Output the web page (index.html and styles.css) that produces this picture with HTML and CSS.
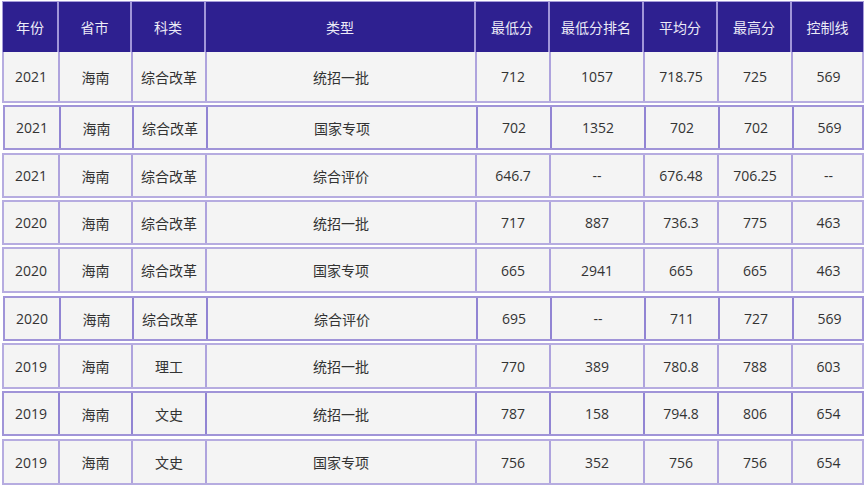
FILE: index.html
```html
<!DOCTYPE html>
<html lang="zh">
<head>
<meta charset="utf-8">
<link rel="stylesheet" href="styles.css">
</head>
<body>
<div class="table">
  <div class="row head">
    <div class="c">年份</div><div class="c">省市</div><div class="c">科类</div><div class="c">类型</div><div class="c">最低分</div><div class="c">最低分排名</div><div class="c">平均分</div><div class="c">最高分</div><div class="c">控制线</div>
  </div>
  <div class="row first">
    <div class="c">2021</div><div class="c">海南</div><div class="c">综合改革</div><div class="c">统招一批</div><div class="c">712</div><div class="c">1057</div><div class="c">718.75</div><div class="c">725</div><div class="c">569</div>
  </div>
  <div class="row dark shift">
    <div class="c">2021</div><div class="c">海南</div><div class="c">综合改革</div><div class="c">国家专项</div><div class="c">702</div><div class="c">1352</div><div class="c">702</div><div class="c">702</div><div class="c">569</div>
  </div>
  <div class="row gap4">
    <div class="c">2021</div><div class="c">海南</div><div class="c">综合改革</div><div class="c">综合评价</div><div class="c">646.7</div><div class="c">--</div><div class="c">676.48</div><div class="c">706.25</div><div class="c">--</div>
  </div>
  <div class="row">
    <div class="c">2020</div><div class="c">海南</div><div class="c">综合改革</div><div class="c">统招一批</div><div class="c">717</div><div class="c">887</div><div class="c">736.3</div><div class="c">775</div><div class="c">463</div>
  </div>
  <div class="row tall">
    <div class="c">2020</div><div class="c">海南</div><div class="c">综合改革</div><div class="c">国家专项</div><div class="c">665</div><div class="c">2941</div><div class="c">665</div><div class="c">665</div><div class="c">463</div>
  </div>
  <div class="row dark shift gap4">
    <div class="c">2020</div><div class="c">海南</div><div class="c">综合改革</div><div class="c">综合评价</div><div class="c">695</div><div class="c">--</div><div class="c">711</div><div class="c">727</div><div class="c">569</div>
  </div>
  <div class="row tall">
    <div class="c">2019</div><div class="c">海南</div><div class="c">理工</div><div class="c">统招一批</div><div class="c">770</div><div class="c">389</div><div class="c">780.8</div><div class="c">788</div><div class="c">603</div>
  </div>
  <div class="row dark">
    <div class="c">2019</div><div class="c">海南</div><div class="c">文史</div><div class="c">统招一批</div><div class="c">787</div><div class="c">158</div><div class="c">794.8</div><div class="c">806</div><div class="c">654</div>
  </div>
  <div class="row gap4 tall">
    <div class="c">2019</div><div class="c">海南</div><div class="c">文史</div><div class="c">国家专项</div><div class="c">756</div><div class="c">352</div><div class="c">756</div><div class="c">756</div><div class="c">654</div>
  </div>
</div>
</body>
</html>
```

FILE: styles.css
```css
* { box-sizing: border-box; }
html, body { margin: 0; padding: 0; background: #ffffff; }
body {
  width: 866px;
  height: 489px;
  overflow: hidden;
  font-family: "Open Sans", "Noto Sans CJK SC", sans-serif;
  font-size: 14px;
  color: #333333;
}
.table {
  padding: 1px 0 0 2px;
  width: 864px;
}
.row {
  display: grid;
  grid-template-columns: 54px 73px 74px 270px 74px 94px 74px 74px 73px;
  height: 45px;
  margin-top: 2px;
  background: #f4f4f4;
  border: 2px solid #b6ace0;
}
.row.tall { height: 46px; }
.row .c {
  display: flex;
  align-items: center;
  justify-content: center;
  border-left: 2px solid #aea3dd;
  white-space: nowrap;
}
.row .c:first-child { border-left: none; }
.row.dark { border-color: #a094d8; }
.row.dark .c { border-left-color: #9184d3; }
.row.dark .c:first-child { border-left: none; }
.row.shift { margin-left: 1px; }
.row.gap4 { margin-top: 3px; }
.head {
  height: 51px;
  margin-top: 0;
  background: #2e2090;
  color: #ecebf7;
  border: 1px solid #a69cda;
  border-bottom: none;
}
.head .c { border-left: 2px solid #a196d9; }
.row.first {
  height: 51px;
  margin-top: 0;
  border-top: none;
}
```
